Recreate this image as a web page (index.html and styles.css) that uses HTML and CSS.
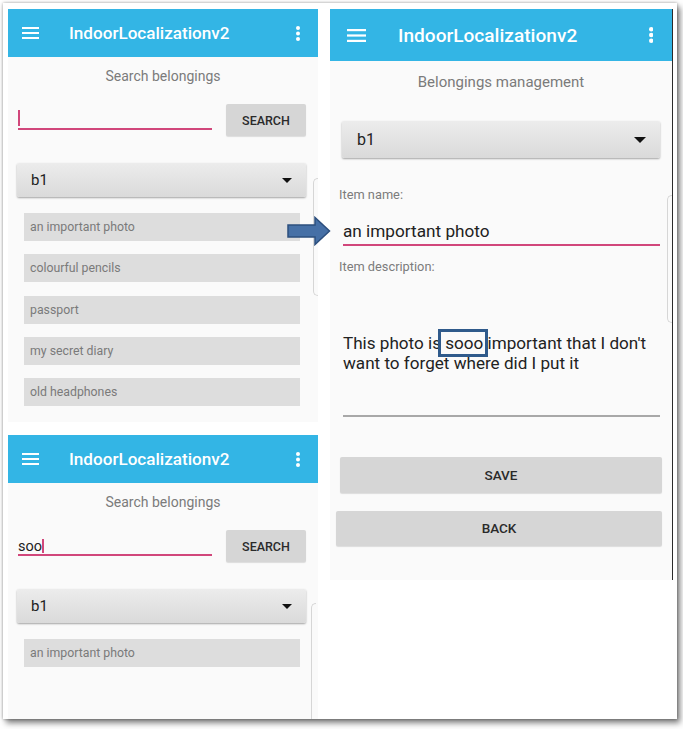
FILE: index.html
```html
<!DOCTYPE html>
<html>
<head>
<meta charset="utf-8">
<link rel="stylesheet" href="styles.css">
</head>
<body>
<div class="card">
  <div class="left-col">
    <section class="phone phone-a">
      <header class="appbar">
        <svg class="burger" width="17" height="12" viewBox="0 0 17 12"><rect x="0" y="0" width="17" height="2"/><rect x="0" y="5" width="17" height="2"/><rect x="0" y="10" width="17" height="2"/></svg>
        <span class="title">IndoorLocalizationv2</span>
        <svg class="kebab" width="4" height="15" viewBox="0 0 4 15"><circle cx="2" cy="2" r="2"/><circle cx="2" cy="7.5" r="2"/><circle cx="2" cy="13" r="2"/></svg>
      </header>
      <div class="heading">Search belongings</div>
      <div class="search-row">
        <div class="input"><span class="cursor"></span></div>
        <div class="btn search-btn">SEARCH</div>
      </div>
      <div class="spinner"><span>b1</span><span class="caret"></span></div>
      <ul class="items">
        <li>an important photo</li>
        <li>colourful pencils</li>
        <li>passport</li>
        <li>my secret diary</li>
        <li>old headphones</li>
      </ul>
      <div class="handle handle-a"></div>
    </section>
    <section class="phone phone-b">
      <header class="appbar">
        <svg class="burger" width="17" height="12" viewBox="0 0 17 12"><rect x="0" y="0" width="17" height="2"/><rect x="0" y="5" width="17" height="2"/><rect x="0" y="10" width="17" height="2"/></svg>
        <span class="title">IndoorLocalizationv2</span>
        <svg class="kebab" width="4" height="15" viewBox="0 0 4 15"><circle cx="2" cy="2" r="2"/><circle cx="2" cy="7.5" r="2"/><circle cx="2" cy="13" r="2"/></svg>
      </header>
      <div class="heading">Search belongings</div>
      <div class="search-row">
        <div class="input"><span class="typed">soo</span><span class="cursor inline"></span></div>
        <div class="btn search-btn">SEARCH</div>
      </div>
      <div class="spinner"><span>b1</span><span class="caret"></span></div>
      <ul class="items">
        <li>an important photo</li>
      </ul>
      <div class="handle handle-b"></div>
    </section>
  </div>

  <section class="phone phone-c">
    <header class="appbar appbar-lg">
      <svg class="burger" width="19" height="13" viewBox="0 0 19 13"><rect x="0" y="0" width="19" height="2.2"/><rect x="0" y="5.4" width="19" height="2.2"/><rect x="0" y="10.8" width="19" height="2.2"/></svg>
      <span class="title">IndoorLocalizationv2</span>
      <svg class="kebab" width="4.4" height="16" viewBox="0 0 4.4 16"><circle cx="2.2" cy="2.2" r="2.2"/><circle cx="2.2" cy="8" r="2.2"/><circle cx="2.2" cy="13.8" r="2.2"/></svg>
    </header>
    <div class="heading heading-lg">Belongings management</div>
    <div class="spinner spinner-lg"><span>b1</span><span class="caret"></span></div>
    <div class="label label-name">Item name:</div>
    <div class="name-field">an important photo</div>
    <div class="label label-desc">Item description:</div>
    <div class="desc">This photo is <span class="mark">sooo</span> important that I don't want to forget where did I put it</div>
    <div class="desc-line"></div>
    <div class="btn wide save">SAVE</div>
    <div class="btn wide back">BACK</div>
    <div class="handle handle-c"></div>
  </section>

  <svg class="arrow" width="44" height="30" viewBox="0 0 44 30"><path d="M1 9 H28 V1.5 L42.5 15 L28 28.5 V21 H1 Z" fill="#4670a6" stroke="#2c4f7e" stroke-width="1.5" stroke-linejoin="miter"/></svg>
</div>
</body>
</html>
```

FILE: styles.css
```css
* { box-sizing: border-box; }
html, body { margin: 0; padding: 0; }
body {
  background: #ffffff;
  width: 683px;
  height: 729px;
  font-family: Roboto, "Noto Sans", sans-serif;
  overflow: hidden;
}
.card {
  position: relative;
  margin: 3px 0 0 3px;
  width: 674px;
  height: 716px;
  background: #ffffff;
  box-shadow: 3px 4px 6px rgba(0,0,0,0.5), 0 0 3px rgba(0,0,0,0.35);
  display: flex;
  gap: 12px;
  padding: 6px 0 0 5px;
  overflow: hidden;
}
.left-col {
  width: 310px;
  display: flex;
  flex-direction: column;
  gap: 13px;
}
.phone {
  position: relative;
  background: #fafafa;
}
.phone-a { height: 413px; }
.phone-b { flex: 1; }
.phone-c {
  width: 343px;
  height: 571px;
  border-right: 1px solid #2b2b2b;
}

/* app bar */
.appbar {
  height: 48px;
  background: #33b5e5;
  display: flex;
  align-items: center;
  padding: 0 18px 0 14px;
  color: #fff;
}
.appbar svg { fill: #fff; display: block; }
.title {
  margin-left: 30px;
  font-size: 17.1px;
  font-weight: 500;
}
.kebab { margin-left: auto; }
.appbar-lg {
  height: 52px;
  padding: 0 19px 0 17px;
}
.appbar-lg .title {
  margin-left: 32px;
  font-size: 19.1px;
}

.heading {
  margin-top: 11px;
  text-align: center;
  font-size: 14px;
  line-height: 16px;
  color: #7b7b7b;
}
.heading-lg {
  margin-top: 12px;
  font-size: 15px;
  line-height: 18px;
}

/* search row */
.search-row {
  margin-top: 20px;
  display: flex;
  gap: 14px;
  padding-left: 10px;
  align-items: flex-start;
}
.input {
  position: relative;
  width: 194px;
  height: 26px;
  border-bottom: 2px solid #d1477b;
  display: flex;
  align-items: flex-start;
  padding-top: 5px;
}
.cursor {
  display: block;
  width: 2px;
  height: 16px;
  margin-top: 1px;
  background: #d1477b;
}
.cursor.inline { margin-top: 4px; height: 14px; }
.typed {
  font-size: 14.5px;
  line-height: 20px;
  color: #222;
  margin-top: 2px;
}
.btn {
  background: #d6d6d6;
  color: #2a2a2a;
  font-weight: 500;
  display: flex;
  align-items: center;
  justify-content: center;
  border-radius: 2px;
  box-shadow: 0 1px 1px rgba(0,0,0,0.12);
}
.search-btn {
  width: 80px;
  height: 32px;
  font-size: 12.5px;
}

/* spinner */
.spinner {
  margin: 27px 0 0 9px;
  width: 289px;
  height: 34px;
  background: linear-gradient(#ececec, #dadada);
  border-radius: 2px;
  box-shadow: 0 1px 2px rgba(0,0,0,0.35);
  display: flex;
  align-items: center;
  justify-content: space-between;
  padding: 0 14px 0 14px;
  font-size: 15px;
  color: #222;
}
.caret {
  width: 0; height: 0;
  border-left: 5.5px solid transparent;
  border-right: 5.5px solid transparent;
  border-top: 5.5px solid #111;
}
.spinner-lg {
  margin: 30px 0 0 12px;
  width: 318px;
  height: 37px;
  padding: 0 14px 0 15px;
  font-size: 16px;
}
.spinner-lg .caret {
  border-left-width: 6px;
  border-right-width: 6px;
  border-top-width: 6px;
}

/* list */
.items {
  list-style: none;
  margin: 16px 0 0 16px;
  padding: 0;
  width: 276px;
  display: flex;
  flex-direction: column;
  gap: 13.3px;
}
.items li {
  height: 28px;
  background: #dddddd;
  color: #7a7a7a;
  font-size: 12.3px;
  display: flex;
  align-items: center;
  padding-left: 6px;
}

/* drawer handles */
.handle {
  position: absolute;
  border: 1px solid #d6d6d6;
  border-right: none;
  border-radius: 6px 0 0 6px;
  width: 5px;
}
.handle-a { right: 0; top: 169px; height: 118px; }
.handle-b { right: 2px; top: 168px; bottom: -10px; }
.handle-c { right: 0; top: 186px; height: 128px; }

/* right panel form */
.label {
  margin-left: 9px;
  font-size: 12.8px;
  line-height: 16px;
  color: #7c7c7c;
}
.label-name { margin-top: 29px; }
.name-field {
  margin: 18px 0 0 13px;
  width: 317px;
  font-size: 17.2px;
  line-height: 20px;
  color: #222;
  padding-bottom: 3px;
  border-bottom: 2px solid #d1477b;
}
.label-desc { margin-top: 13px; }
.desc {
  margin: 58px 0 0 13px;
  width: 320px;
  font-size: 17.1px;
  line-height: 20px;
  color: #222;
}
.mark { position: relative; }
.mark::after {
  content: "";
  position: absolute;
  left: -7px;
  right: -5px;
  top: -4px;
  bottom: -4px;
  border: 3px solid #2f5a8b;
}
.desc-line {
  margin: 42px 0 0 13px;
  width: 317px;
  height: 1.5px;
  background: #a8a8a8;
}
.wide {
  height: 36px;
  font-size: 13.5px;
}
.save { margin: 40px 0 0 10px; width: 322px; }
.back { margin: 18px 0 0 6px; width: 326px; height: 35px; }

.arrow {
  position: absolute;
  left: 284px;
  top: 213px;
}
```
